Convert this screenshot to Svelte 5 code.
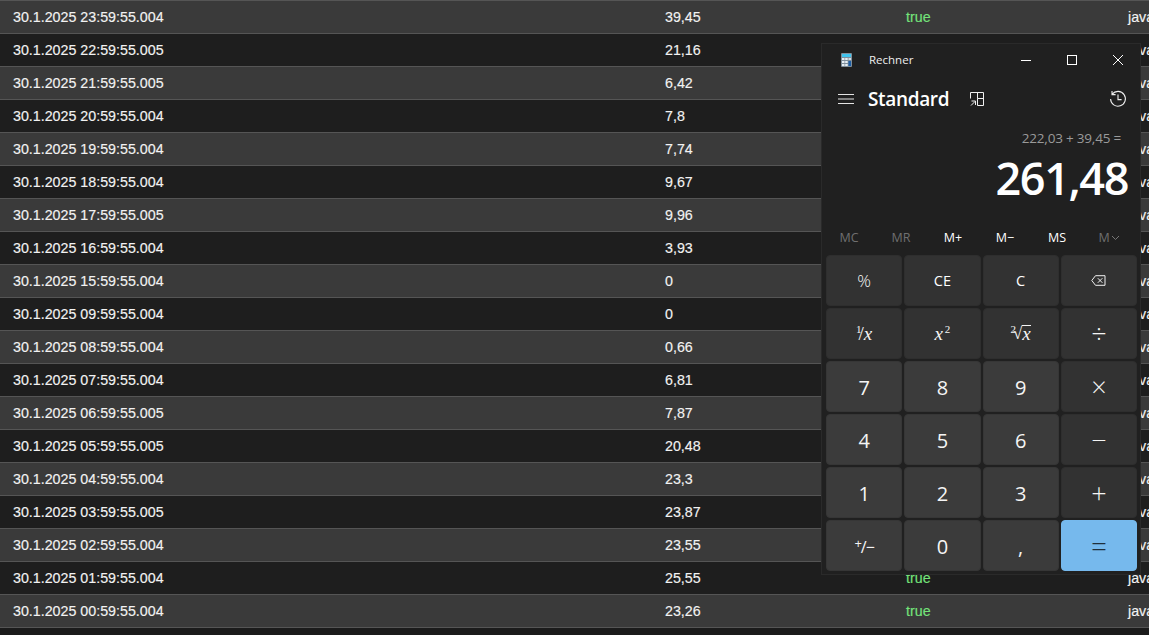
<script>
  const rows = [
    ['30.1.2025 23:59:55.004', '39,45'],
    ['30.1.2025 22:59:55.005', '21,16'],
    ['30.1.2025 21:59:55.005', '6,42'],
    ['30.1.2025 20:59:55.004', '7,8'],
    ['30.1.2025 19:59:55.004', '7,74'],
    ['30.1.2025 18:59:55.004', '9,67'],
    ['30.1.2025 17:59:55.005', '9,96'],
    ['30.1.2025 16:59:55.004', '3,93'],
    ['30.1.2025 15:59:55.004', '0'],
    ['30.1.2025 09:59:55.004', '0'],
    ['30.1.2025 08:59:55.004', '0,66'],
    ['30.1.2025 07:59:55.004', '6,81'],
    ['30.1.2025 06:59:55.005', '7,87'],
    ['30.1.2025 05:59:55.005', '20,48'],
    ['30.1.2025 04:59:55.004', '23,3'],
    ['30.1.2025 03:59:55.005', '23,87'],
    ['30.1.2025 02:59:55.004', '23,55'],
    ['30.1.2025 01:59:55.004', '25,55'],
    ['30.1.2025 00:59:55.004', '23,26']
  ];

  const memory = [
    { label: 'MC', off: true },
    { label: 'MR', off: true },
    { label: 'M+' },
    { label: 'M−' },
    { label: 'MS' },
    { label: 'M', off: true, chevron: true }
  ];

  const digits = ['7', '8', '9', null, '4', '5', '6', null, '1', '2', '3', null];
  const ops = ['×', '−', '+'];
</script>

<div class="page">
  <div class="table">
    {#each rows as row}
      <div class="row">
        <span>{row[0]}</span>
        <span>{row[1]}</span>
        <span class="flag">true</span>
        <span>java</span>
      </div>
    {/each}
  </div>

  <div class="calc">
    <header class="titlebar">
      <svg class="appicon" width="11" height="14" viewBox="0 0 11 14">
        <rect width="11" height="14" rx="1" fill="#7f8f9c" />
        <rect x="1" y="1" width="9" height="3" fill="#3fc4ee" />
        <rect x="1" y="5" width="2.5" height="2" fill="#e6eef3" />
        <rect x="4.2" y="5" width="2.5" height="2" fill="#e6eef3" />
        <rect x="7.5" y="5" width="2.5" height="2" fill="#d3dde4" />
        <rect x="1" y="8" width="2.5" height="2" fill="#e6eef3" />
        <rect x="4.2" y="8" width="2.5" height="2" fill="#e6eef3" />
        <rect x="1" y="11" width="2.5" height="2" fill="#e6eef3" />
        <rect x="4.2" y="11" width="2.5" height="2" fill="#e6eef3" />
        <rect x="7.5" y="8" width="2.5" height="5" fill="#1c5fa8" />
      </svg>
      <span class="apptitle">Rechner</span>
      <div class="winbtns">
        <svg width="12" height="12" viewBox="0 0 12 12"><path d="M1 6.5h10" stroke="#fff" fill="none" /></svg>
        <svg width="12" height="12" viewBox="0 0 12 12"><rect x="1.5" y="1.5" width="9" height="9" stroke="#fff" fill="none" /></svg>
        <svg width="12" height="12" viewBox="0 0 12 12"><path d="M1 1l10 10M11 1L1 11" stroke="#fff" fill="none" /></svg>
      </div>
    </header>

    <div class="modebar">
      <svg width="16" height="12" viewBox="0 0 16 12"><path d="M0 1.5h16M0 6h16M0 10.5h16" stroke="#e4e4e4" fill="none" /></svg>
      <span class="mode">Standard</span>
      <svg class="keep" width="15" height="15" viewBox="0 0 15 15">
        <path d="M.5 6.5V.5H13.5V13.5H7.5V6.5H13.5M7.5 6.5V.5M1 13.5L5 9.5M1.5 9H5.5V13" stroke="#f0f0f0" fill="none" />
      </svg>
      <svg class="history" width="18" height="18" viewBox="0 0 18 18">
        <path d="M3.2 4.2A7.4 7.4 0 1 1 1.6 9M3 1v3.6h3.6M9 4.6V9.6H12.6" stroke="#f0f0f0" stroke-width="1.1" fill="none" />
      </svg>
    </div>

    <div class="expr">222,03 + 39,45 =</div>
    <div class="result">261,48</div>

    <div class="memory">
      {#each memory as m}
        <span class:off={m.off}>
          {m.label}{#if m.chevron}<svg width="9" height="6" viewBox="0 0 9 6"><path d="M1 1l3.5 3.5L8 1" stroke="#777" fill="none" /></svg>{/if}
        </span>
      {/each}
    </div>

    <div class="keys">
      <button class="key percent">%</button>
      <button class="key small">CE</button>
      <button class="key small">C</button>
      <button class="key" aria-label="Backspace">
        <svg width="15" height="11" viewBox="0 0 15 11">
          <path d="M4.5.7H14V10.3H4.5L.8 5.5ZM6.8 3.2l4.6 4.6M11.4 3.2L6.8 7.8" stroke="#f0f0f0" fill="none" />
        </svg>
      </button>

      <button class="key math"><span class="frac"><sup>1</sup>/</span><i>x</i></button>
      <button class="key math"><i>x</i><sup>2</sup></button>
      <button class="key math"><sup>2</sup><span class="radical">√</span><i class="over">x</i></button>
      <button class="key op">÷</button>

      {#each digits as d, i}
        {#if d}
          <button class="key num">{d}</button>
        {:else}
          <button class="key op">{ops[(i - 3) / 4]}</button>
        {/if}
      {/each}

      <button class="key num sign"><sup>+</sup>/−</button>
      <button class="key num">0</button>
      <button class="key num">,</button>
      <button class="key equals">=</button>
    </div>
  </div>
</div>

<style>
  :global(body) {
    background: #1b1b1b;
    overflow: hidden;
  }
  .page {
    position: relative;
    width: 1149px;
    height: 635px;
    overflow: hidden;
    background: #1b1b1b;
  }
  .table {
    padding-top: 1px;
  }
  .row {
    display: grid;
    grid-template-columns: 652px 241px 222px 40px;
    align-items: center;
    height: 32px;
    padding-left: 13px;
    border-bottom: 1px solid #555;
    background: #1e1e1e;
    color: #f2f2f2;
    font: 400 14.25px "Liberation Sans", Arial, sans-serif;
    -webkit-text-stroke: 0.15px #f2f2f2;
    white-space: nowrap;
  }
  .row:nth-child(odd) {
    background: #3a3a3a;
  }
  .row:first-child {
    box-shadow: 0 -1px 0 #555;
  }
  .flag {
    color: #74e37a;
    -webkit-text-stroke: 0.15px #74e37a;
  }
  .calc {
    position: absolute;
    left: 821px;
    top: 43px;
    width: 320px;
    height: 532px;
    box-sizing: border-box;
    border: 1px solid #2a2a2a;
    background: #202020;
    color: #fff;
    font-family: "Open Sans", "Noto Sans", sans-serif;
    display: flex;
    flex-direction: column;
  }
  .titlebar {
    display: flex;
    align-items: center;
    height: 31px;
    padding-left: 19px;
    flex: none;
  }
  .apptitle {
    margin-left: 17px;
    font-size: 11.5px;
    color: #eee;
  }
  .winbtns {
    margin-left: auto;
    display: flex;
    gap: 34px;
    padding-right: 16px;
  }
  .modebar {
    display: flex;
    align-items: center;
    height: 48px;
    padding-left: 16px;
    flex: none;
  }
  .mode {
    margin-left: 14px;
    font-size: 19px;
    font-weight: 600;
    letter-spacing: -0.35px;
  }
  .keep {
    margin-left: 21px;
  }
  .history {
    margin-left: auto;
    margin-right: 13px;
  }
  .expr {
    text-align: right;
    padding-right: 19px;
    margin-top: 6px;
    font-size: 13.5px;
    letter-spacing: -0.2px;
    color: #9a9a9a;
  }
  .result {
    text-align: right;
    padding-right: 12px;
    margin-top: 1px;
    font-size: 45px;
    font-weight: 600;
    line-height: 60px;
    letter-spacing: -1.4px;
  }
  .memory {
    display: grid;
    grid-template-columns: repeat(6, 1fr);
    margin-top: 20px;
    padding: 0 5px 0 1px;
    font-size: 12.5px;
    text-align: center;
    line-height: 20px;
  }
  .memory .off {
    color: #6f6f6f;
  }
  .memory svg {
    margin-left: 1px;
    vertical-align: 1px;
  }
  .keys {
    display: grid;
    grid-template-columns: repeat(4, 1fr);
    grid-auto-rows: 51px;
    gap: 2px;
    padding: 0 3px 0 4px;
    margin-top: 7px;
  }
  .key {
    display: flex;
    align-items: center;
    justify-content: center;
    padding: 0;
    border: 1px solid #2e2e2e;
    border-radius: 4px;
    background: #323232;
    color: #f5f5f5;
    font-family: inherit;
    font-size: 15px;
  }
  .percent {
    font-size: 17px;
    font-weight: 300;
  }
  .small {
    font-size: 14.5px;
    color: #ffffff;
  }
  .num {
    background: #3b3b3b;
    border-color: #363636;
    font-size: 20px;
    padding-top: 2px;
  }
  .op {
    font-size: 27px;
    font-weight: 300;
  }
  .math {
    font-family: "Liberation Serif", serif;
    font-size: 19px;
  }
  .math sup {
    font-size: 11px;
    line-height: 1;
    align-self: flex-start;
    margin-top: 15px;
    margin-left: 2px;
  }
  .math sup:first-child {
    margin-left: 0;
    margin-right: -3px;
  }
  .radical {
    font-size: 17px;
  }
  .over {
    border-top: 1px solid #f5f5f5;
    line-height: 16px;
  }
  .frac {
    display: flex;
    align-items: center;
    align-self: stretch;
    font-size: 19px;
    font-weight: 300;
  }
  .frac sup {
    margin-right: -2px;
  }
  .sign {
    font-size: 16px;
    letter-spacing: -1px;
  }
  .sign sup {
    font-size: 13px;
    line-height: 1;
    align-self: flex-start;
    margin-top: 14px;
  }
  .equals {
    background: #76b9ed;
    border-color: #76b9ed;
    color: #1f2f3c;
    font-size: 28px;
    font-weight: 300;
  }
</style>
